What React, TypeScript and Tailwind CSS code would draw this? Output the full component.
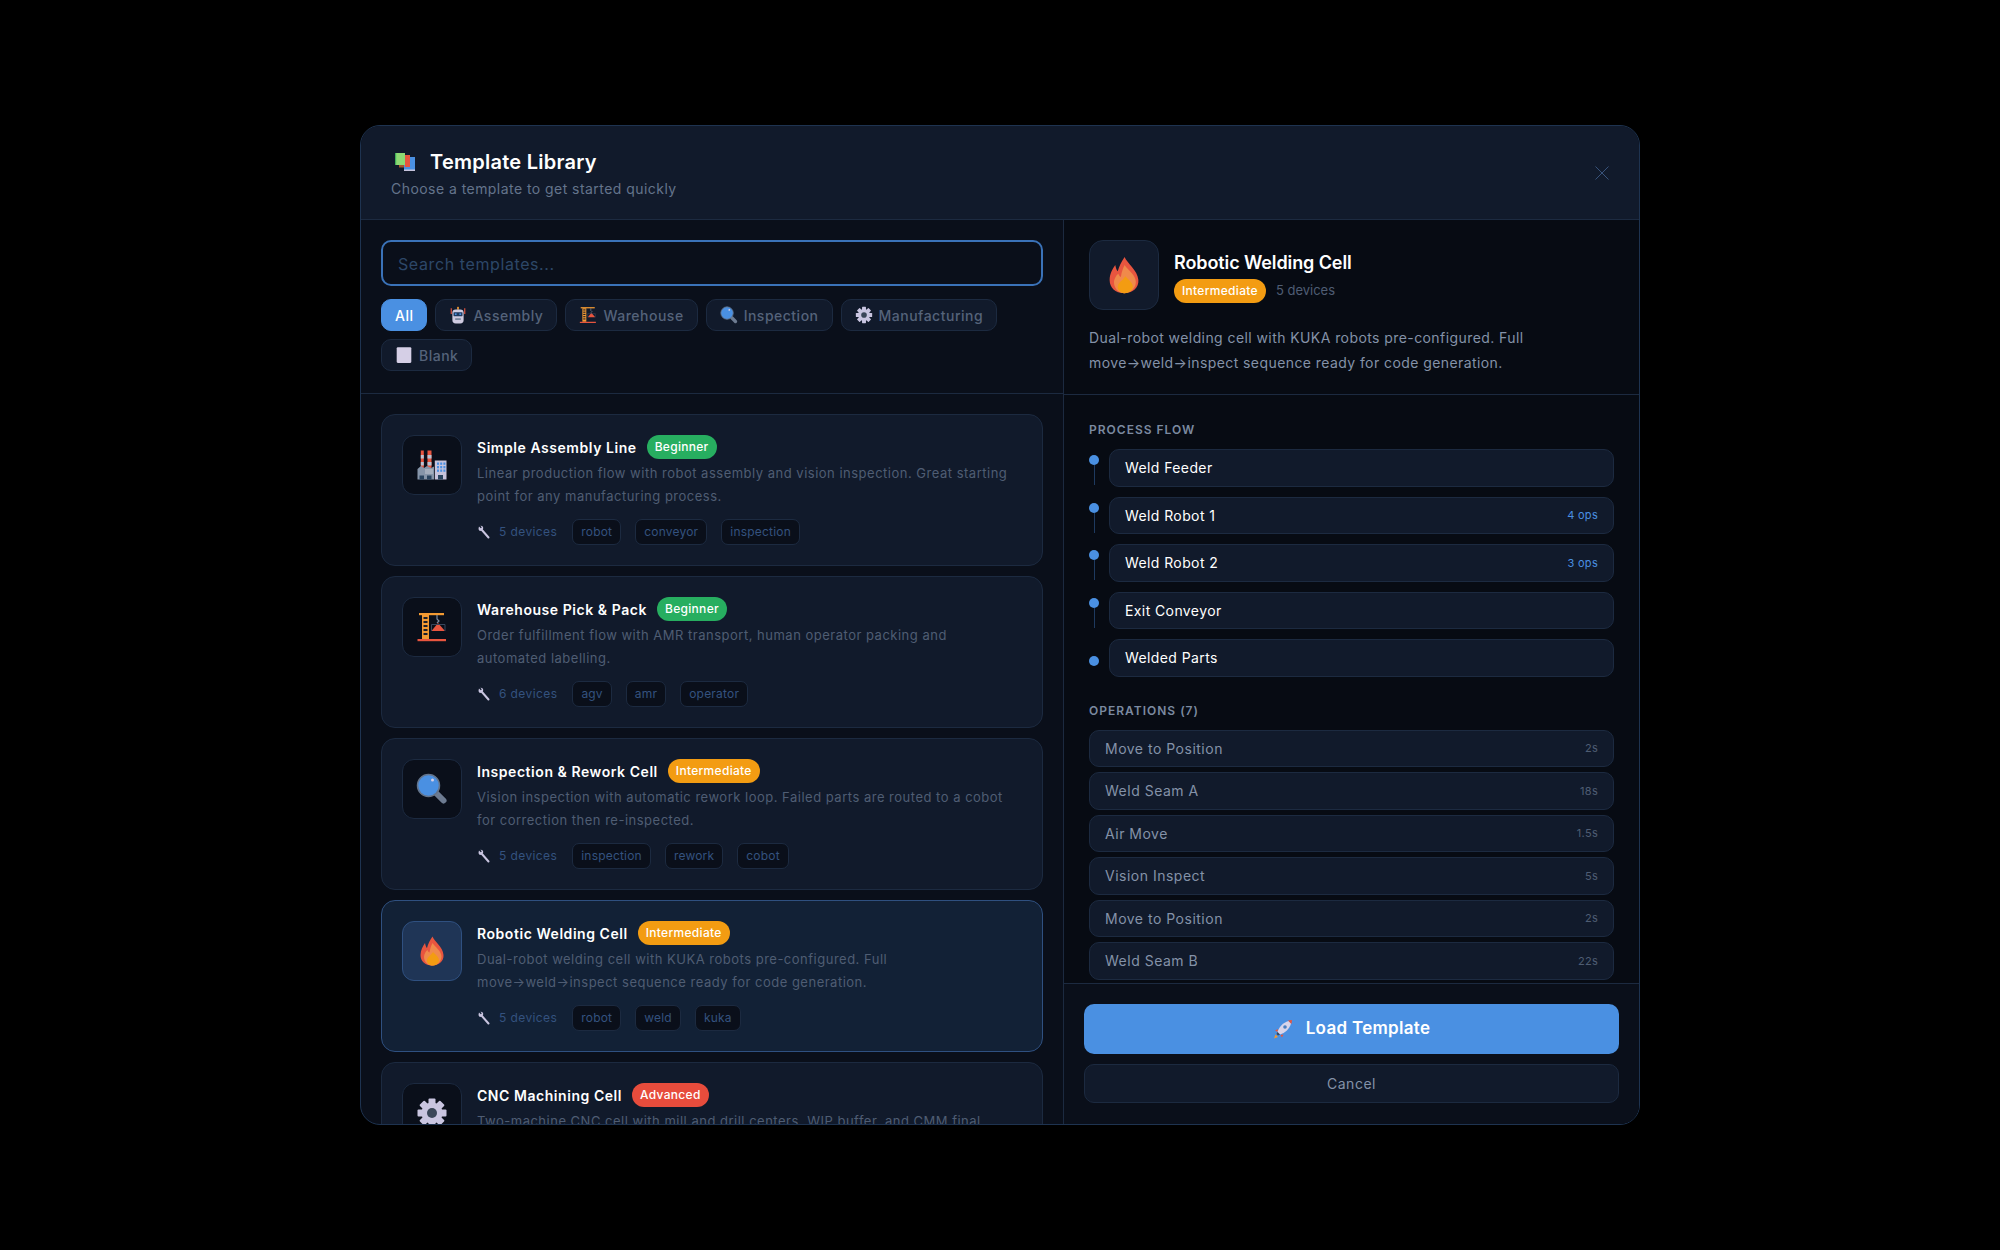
const font = { fontFamily: '"Inter", "Noto Sans", sans-serif' };

type Level = "Beginner" | "Intermediate" | "Advanced";
type IconName = "factory" | "crane" | "search" | "fire" | "gear" | "robot" | "blank";

type Template = {
  name: string;
  icon: IconName;
  level: Level;
  desc: string[];
  devices?: number;
  tags?: string[];
};

const templates: Template[] = [
  {
    name: "Simple Assembly Line",
    icon: "factory",
    level: "Beginner",
    desc: ["Linear production flow with robot assembly and vision inspection. Great starting", "point for any manufacturing process."],
    devices: 5,
    tags: ["robot", "conveyor", "inspection"],
  },
  {
    name: "Warehouse Pick & Pack",
    icon: "crane",
    level: "Beginner",
    desc: ["Order fulfillment flow with AMR transport, human operator packing and", "automated labelling."],
    devices: 6,
    tags: ["agv", "amr", "operator"],
  },
  {
    name: "Inspection & Rework Cell",
    icon: "search",
    level: "Intermediate",
    desc: ["Vision inspection with automatic rework loop. Failed parts are routed to a cobot", "for correction then re-inspected."],
    devices: 5,
    tags: ["inspection", "rework", "cobot"],
  },
  {
    name: "Robotic Welding Cell",
    icon: "fire",
    level: "Intermediate",
    desc: ["Dual-robot welding cell with KUKA robots pre-configured. Full", "move→weld→inspect sequence ready for code generation."],
    devices: 5,
    tags: ["robot", "weld", "kuka"],
  },
  {
    name: "CNC Machining Cell",
    icon: "gear",
    level: "Advanced",
    desc: ["Two-machine CNC cell with mill and drill centers, WIP buffer, and CMM final"],
  },
];

const filters: [IconName | null, string][] = [
  [null, "All"],
  ["robot", "Assembly"],
  ["crane", "Warehouse"],
  ["search", "Inspection"],
  ["gear", "Manufacturing"],
  ["blank", "Blank"],
];

const flow = [
  ["Weld Feeder", ""],
  ["Weld Robot 1", "4 ops"],
  ["Weld Robot 2", "3 ops"],
  ["Exit Conveyor", ""],
  ["Welded Parts", ""],
];

const ops = [
  ["Move to Position", "2s"],
  ["Weld Seam A", "18s"],
  ["Air Move", "1.5s"],
  ["Vision Inspect", "5s"],
  ["Move to Position", "2s"],
  ["Weld Seam B", "22s"],
];

// flat emoji style drawings, all on a 32 unit grid
function Icon({ name, size }: { name: IconName; size: number }) {
  return (
    <svg width={size} height={size} viewBox="0 0 32 32" className="shrink-0">
      {name === "factory" && (
        <>
          <rect x="4.8" y="1.5" width="3" height="18" fill="#e8553f" />
          <rect x="4.8" y="6" width="3" height="3.5" fill="#b9c3d2" />
          <rect x="4.8" y="13" width="3" height="3.5" fill="#b9c3d2" />
          <rect x="11.5" y="1.5" width="4" height="18" fill="#e8553f" />
          <rect x="11.5" y="6" width="4" height="3.5" fill="#b9c3d2" />
          <rect x="11.5" y="13" width="4" height="3.5" fill="#b9c3d2" />
          <path d="M1.5 20 5 17 8 19 11 17 15 19 18 17.5V30.5H1.5Z" fill="#8695a9" />
          <rect x="9" y="20" width="8" height="5" fill="#a4aebd" />
          <rect x="18.8" y="11.5" width="11.7" height="19" fill="#c6c3dc" />
          {[21, 24.2, 27.4].flatMap((x) =>
            [13.5, 17, 20.5].map((y) => <rect key={`${x}-${y}`} x={x} y={y} width="2" height="2.3" fill="#4a90e2" />),
          )}
          <rect x="3.5" y="26.5" width="4.5" height="4" fill="#2a4560" />
          <rect x="11" y="26.5" width="4.5" height="4" fill="#2a4560" />
          <rect x="22" y="26" width="5" height="4.5" fill="#2a4560" />
        </>
      )}
      {name === "crane" && (
        <>
          <rect x="3" y="2" width="25" height="2.2" fill="#f39a32" />
          <rect x="6" y="4" width="7" height="24" fill="#f39a32" />
          {[6, 10, 14, 18, 22].map((y) => (
            <path key={y} d={`M7.5 ${y}H11.5V${y + 2}H7.5Z`} fill="#1a1f2b" />
          ))}
          <rect x="1.5" y="28" width="28.5" height="2.2" fill="#e8553f" />
          <path d="M21 4V8L23 10 21 12" fill="none" stroke="#7b8aa0" strokeWidth="1.2" />
          <path d="M22 12 29 20H15.5Z" fill="#e8553f" />
          <path d="M15.5 13.5H29M15.5 13.5V20M29 13.5V20" fill="none" stroke="#39475c" strokeWidth="1" />
        </>
      )}
      {name === "search" && (
        <>
          <path d="M21 21 27.5 27.5" stroke="#6d7b91" strokeWidth="6" strokeLinecap="round" />
          <circle cx="12.5" cy="12.5" r="11" fill="#4a90e2" stroke="#64748b" strokeWidth="1.5" />
          <circle cx="16.5" cy="7" r="1.5" fill="#d5cfe6" />
        </>
      )}
      {name === "fire" && (
        <>
          <path d="M16.5 1.5C18 6 27 12 27.5 20 28 26 23 30.5 16 30.5 9 30.5 4.5 26 4.5 20 4.5 15 7 11 9 8 9.5 10.5 10 12 11 13 12 9 14 5 16.5 1.5Z" fill="#e8553f" />
          <path d="M16.5 8C19 12 25.5 16 25.5 21.5 25.5 26.5 21 30.5 16 30.5 11 30.5 8 26 8 22 8 19 10 16 11.5 15 12 16.5 12.5 17 13.5 17.5 14 14 15 11 16.5 8Z" fill="#f08a4b" />
          <path d="M17 17C19.5 20 23 22 23 25 23 28.5 20 30.5 16.5 30.5 13 30.5 11 28 11 25.5 11 22 15 20.5 17 17Z" fill="#f39c12" />
        </>
      )}
      {name === "gear" && (
        <>
          {[0, 45, 90, 135].map((a) => (
            <rect key={a} x="12.5" y="1.5" width="7" height="29" rx="1" fill="#c9c5e0" transform={`rotate(${a} 16 16)`} />
          ))}
          <circle cx="16" cy="16" r="10.5" fill="#c9c5e0" />
          <circle cx="16" cy="16" r="5" fill="#3a4658" />
        </>
      )}
      {name === "robot" && (
        <>
          <path d="M4 4V14M28 4V14" stroke="#e8553f" strokeWidth="2" />
          <rect x="14.5" y="1.5" width="3" height="5" fill="#f39a32" />
          <rect x="6" y="6" width="20" height="25" rx="6" fill="#cfcbe0" />
          <rect x="8" y="11" width="16" height="7" rx="1" fill="#1f3a5f" />
          <rect x="10.5" y="13" width="3" height="3" fill="#4a90e2" />
          <rect x="18.5" y="13" width="3" height="3" fill="#4a90e2" />
          <rect x="11" y="22" width="10" height="2.5" fill="#64748b" />
        </>
      )}
      {name === "blank" && <rect x="3" y="2" width="26" height="28" rx="2" fill="#d5cfe6" />}
    </svg>
  );
}

function Wrench() {
  return (
    <svg width="14" height="14" viewBox="0 0 14 14" className="shrink-0">
      <path d="M4.5 4.5 11.5 12.5" stroke="#c9c5e0" strokeWidth="2" strokeLinecap="round" />
      <path d="M2 1.5 3.8 3.2 4.8 2.2 3.4 0.8C5 0.5 6.6 1.7 6.2 3.6L5 5.2 3.2 6C1.7 5.8 1 4 2 1.5Z" fill="#c9c5e0" />
    </svg>
  );
}

function Rocket() {
  return (
    <svg width="20" height="20" viewBox="0 0 20 20" className="shrink-0">
      <path d="M2.5 15.5 1 19.5 5 18Z" fill="#f39a32" />
      <path d="M5 10 2 11.5 4.5 13ZM10.5 15.5 9 18.5 7.5 16Z" fill="#e8553f" />
      <path d="M4.5 13C6 8 10 3.5 15.5 2L18 4.5C16.5 10 12 14 7 15.5Z" fill="#d9d5ea" />
      <path d="M15 1.5 19 1 18.5 5Z" fill="#e8553f" />
      <circle cx="12" cy="8" r="1.8" fill="#4a7fc0" />
      <path d="M4.5 13 7 15.5 5 16.5 3.5 15Z" fill="#39475c" />
    </svg>
  );
}

function Books() {
  return (
    <svg width="24" height="24" viewBox="0 0 24 24" className="shrink-0">
      <rect x="8" y="14" width="7" height="3.5" fill="#a5552a" />
      <rect x="13" y="7" width="11" height="14" fill="#4a90e2" />
      <rect x="13" y="19.5" width="11" height="1.5" fill="#c6c3dc" />
      <rect x="14" y="5" width="5" height="12" fill="#e8553f" />
      <rect x="4" y="3" width="10" height="12" fill="#8ed973" />
      <rect x="4" y="3" width="1.2" height="12" fill="#3fae5a" />
    </svg>
  );
}

function Badge({ level }: { level: Level }) {
  const bg = level === "Beginner" ? "bg-[#27ae60]" : level === "Intermediate" ? "bg-[#f39c12]" : "bg-[#e74c3c]";
  return <span className={`rounded-full px-[8px] py-[3px] text-[12px] leading-[18px] font-medium tracking-[0.3px] text-white ${bg}`}>{level}</span>;
}

function Card({ t, active }: { t: Template; active: boolean }) {
  return (
    <div
      className={`flex shrink-0 gap-[15px] rounded-[14px] border p-[20px] ${
        active ? "border-[#2f5080] bg-[#122136]" : "border-[#1c2a40] bg-[#111a2b]"
      }`}
    >
      <div
        className={`flex h-[60px] w-[60px] shrink-0 items-center justify-center rounded-[12px] border ${
          active ? "border-[#2f5080] bg-[#1f3556]" : "border-[#1c2a40] bg-[#0a0f1a]"
        }`}
      >
        <Icon name={t.icon} size={32} />
      </div>
      <div className="min-w-0 flex-1">
        <div className="flex h-[24px] items-center gap-[10px]">
          <span className="text-[14px] font-semibold tracking-[0.55px] text-white">{t.name}</span>
          <Badge level={t.level} />
        </div>
        <div className="mt-[3px] text-[13px] leading-[22.5px] tracking-[0.5px] text-[#4f5d73]">
          {t.desc.map((line) => (
            <div key={line} className="whitespace-nowrap">
              {line}
            </div>
          ))}
        </div>
        {t.tags && (
          <div className="mt-[12px] flex items-center gap-[14px]">
            <span className="mr-[1px] flex items-center gap-[8px] text-[12px] tracking-[0.4px] text-[#34527f]">
              <Wrench />
              {t.devices} devices
            </span>
            {t.tags.map((tag) => (
              <span key={tag} className="rounded-[7px] border border-[#1c2a40] bg-[#0a0f1a] px-[8px] py-[3px] text-[12px] leading-[18px] tracking-[0.2px] text-[#34527f]">
                {tag}
              </span>
            ))}
          </div>
        )}
      </div>
    </div>
  );
}

export default function App() {
  return (
    <div style={font} className="flex h-[1250px] w-[2000px] items-center justify-center bg-black">
      <div className="flex h-[1000px] w-[1280px] flex-col overflow-hidden rounded-[20px] border border-[#1e3350] bg-[#0a0f1a]">
        <header className="flex h-[94px] shrink-0 items-start justify-between border-b border-[#1c2a40] bg-[#111a2b] px-[30px] pt-[21px]">
          <div>
            <div className="flex items-center gap-[15px]">
              <Books />
              <h1 className="text-[20px] leading-[30px] font-semibold tracking-[0.25px] text-white">Template Library</h1>
            </div>
            <p className="mt-[2px] text-[14px] leading-[20px] tracking-[0.45px] text-[#64748b]">Choose a template to get started quickly</p>
          </div>
          <svg className="mt-[19px]" width="14" height="14" viewBox="0 0 14 14" fill="none" stroke="#38527a" strokeWidth="1">
            <path d="M0.5 0.5 13.5 13.5M13.5 0.5 0.5 13.5" />
          </svg>
        </header>
        <div className="flex min-h-0 flex-1">
          <div className="flex w-[703px] shrink-0 flex-col border-r border-[#1c2a40]">
            <div className="shrink-0 border-b border-[#1c2a40] px-[20px] pt-[20px] pb-[22px]">
              <div className="flex h-[46px] items-center rounded-[10px] border-2 border-[#3a72b8] px-[15px] pt-[1px] text-[16px] tracking-[0.6px] text-[#2d4768]">Search templates...</div>
              <div className="mt-[13px] flex flex-wrap gap-[8px]">
                {filters.map(([icon, label]) => (
                  <span
                    key={label}
                    className={`flex h-[32px] items-center gap-[6px] rounded-[10px] border px-[13px] text-[14px] font-medium tracking-[0.5px] ${
                      label === "All" ? "border-[#4a90e2] bg-[#4a90e2] text-white" : "border-[#1c2a40] bg-[#111a2b] text-[#55637a]"
                    }`}
                  >
                    {icon && <Icon name={icon} size={18} />}
                    {label}
                  </span>
                ))}
              </div>
            </div>
            <div className="flex min-h-0 flex-1 flex-col gap-[10px] overflow-hidden p-[20px]">
              {templates.map((t) => (
                <Card key={t.name} t={t} active={t.name === "Robotic Welding Cell"} />
              ))}
            </div>
          </div>
          <div className="flex min-w-0 flex-1 flex-col bg-[#070b13]">
            <div className="h-[175px] shrink-0 border-b border-[#1c2a40] px-[25px] pt-[20px]">
              <div className="flex items-center gap-[15px]">
                <div className="flex h-[70px] w-[70px] items-center justify-center rounded-[14px] border border-[#1c2a40] bg-[#111a2b]">
                  <Icon name="fire" size={40} />
                </div>
                <div>
                  <div className="mt-[3px] text-[18px] leading-[26px] font-semibold tracking-[-0.1px] text-white">Robotic Welding Cell</div>
                  <div className="mt-[3px] flex items-center gap-[10px]">
                    <Badge level="Intermediate" />
                    <span className="text-[13px] text-[#4f5d73]">5 devices</span>
                  </div>
                </div>
              </div>
              <p className="mt-[15px] text-[14px] leading-[25px] tracking-[0.42px] text-[#8492a8]">
                Dual-robot welding cell with KUKA robots pre-configured. Full
                <br />
                move→weld→inspect sequence ready for code generation.
              </p>
            </div>
            <div className="min-h-0 flex-1 overflow-hidden px-[25px] pt-[26px]">
              <div className="text-[12px] leading-[18px] font-semibold tracking-[1px] text-[#7b8aa0]">PROCESS FLOW</div>
              <div className="mt-[10px] flex flex-col gap-[10px]">
                {flow.map(([label, meta], i) => (
                  <div key={label} className="flex items-stretch gap-[10px]">
                    <div className={`flex w-[10px] shrink-0 flex-col items-center ${i === flow.length - 1 ? "pt-[17px]" : "pt-[6px]"}`}>
                      <div className="h-[10px] w-[10px] rounded-full bg-[#4a90e2]" />
                      {i < flow.length - 1 && <div className="h-[20px] w-px bg-[#1e3a5f]" />}
                    </div>
                    <div className="flex h-[37.5px] flex-1 items-center justify-between rounded-[10px] border border-[#1c2a40] bg-[#111a2b] px-[15px]">
                      <span className="text-[14px] tracking-[0.4px] text-white">{label}</span>
                      <span className="text-[11px] tracking-[0.3px] text-[#4a90e2]">{meta}</span>
                    </div>
                  </div>
                ))}
              </div>
              <div className="mt-[25px] text-[12px] leading-[18px] font-semibold tracking-[1px] text-[#7b8aa0]">OPERATIONS (7)</div>
              <div className="mt-[10px] flex flex-col gap-[5px]">
                {ops.map(([label, time], i) => (
                  <div key={i} className="flex h-[37.5px] items-center justify-between rounded-[10px] border border-[#1c2a40] bg-[#111a2b] px-[15px]">
                    <span className="text-[14px] tracking-[0.5px] text-[#8492a8]">{label}</span>
                    <span className="text-[11px] tracking-[0.3px] text-[#4f5d73]">{time}</span>
                  </div>
                ))}
              </div>
            </div>
            <div className="shrink-0 border-t border-[#1c2a40] bg-[#0a0f1a] px-[20px] pt-[20px] pb-[21px]">
              <button type="button" className="flex h-[50px] w-full items-center justify-center gap-[13px] rounded-[10px] bg-[#4a90e2] text-[17px] font-semibold tracking-[0.3px] text-white">
                <Rocket />
                Load Template
              </button>
              <button type="button" className="mt-[10px] h-[39px] w-full rounded-[10px] border border-[#1c2a40] bg-[#111a2b] text-[14px] tracking-[0.5px] text-[#8492a8]">
                Cancel
              </button>
            </div>
          </div>
        </div>
      </div>
    </div>
  );
}
